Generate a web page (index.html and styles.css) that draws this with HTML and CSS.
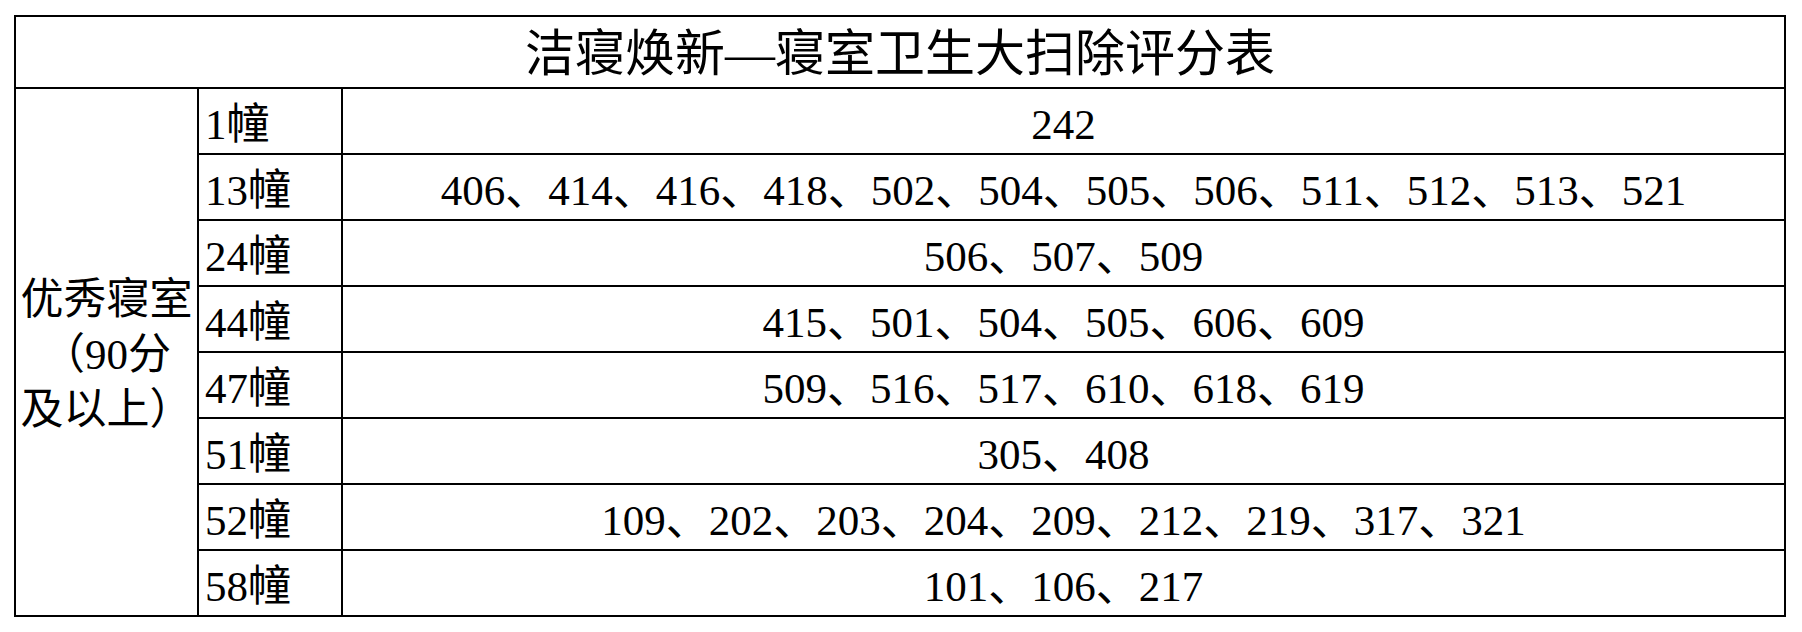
FILE: index.html
```html
<!DOCTYPE html>
<html lang="zh-CN">
<head>
<meta charset="utf-8">
<title>洁寝焕新—寝室卫生大扫除评分表</title>
<link rel="stylesheet" href="styles.css">
</head>
<body>
<div class="sheet">
  <div class="cell title">洁寝焕新—寝室卫生大扫除评分表</div>
  <div class="cell category"><span class="line">优秀寝室</span><span class="line">（90分</span><span class="line">及以上）</span></div>
  <div class="cell building">1幢</div>
  <div class="cell rooms">242</div>
  <div class="cell building">13幢</div>
  <div class="cell rooms">406、414、416、418、502、504、505、506、511、512、513、521</div>
  <div class="cell building">24幢</div>
  <div class="cell rooms">506、507、509</div>
  <div class="cell building">44幢</div>
  <div class="cell rooms">415、501、504、505、606、609</div>
  <div class="cell building">47幢</div>
  <div class="cell rooms">509、516、517、610、618、619</div>
  <div class="cell building">51幢</div>
  <div class="cell rooms">305、408</div>
  <div class="cell building">52幢</div>
  <div class="cell rooms">109、202、203、204、209、212、219、317、321</div>
  <div class="cell building">58幢</div>
  <div class="cell rooms">101、106、217</div>
</div>
</body>
</html>
```
FILE: styles.css
```css
html, body {
  margin: 0;
  padding: 0;
  background: #ffffff;
}

body {
  padding: 15px 0 0 14px;
  font-family: "Liberation Serif", "Noto Sans CJK SC", serif;
  color: #000000;
}

.sheet {
  display: grid;
  grid-template-columns: 181px 142px 1441px;
  grid-template-rows: 70px repeat(8, 64px);
  gap: 2px;
  padding: 2px;
  width: 1768px;
  background: #000000;
}

.cell {
  background: #ffffff;
  display: flex;
  align-items: center;
  font-size: 43px;
  line-height: 1;
  white-space: nowrap;
}

.title {
  grid-column: 1 / 4;
  justify-content: center;
  font-size: 50px;
  padding-top: 4px;
}

.category {
  grid-column: 1;
  grid-row: 2 / 10;
  flex-direction: column;
  justify-content: center;
  align-items: center;
  text-align: center;
  line-height: 55px;
  padding: 4px 0 0;
}

.line {
  display: block;
}

.building {
  grid-column: 2;
  padding: 6px 0 0 6px;
}

.rooms {
  grid-column: 3;
  justify-content: center;
  padding-top: 6px;
}
```
